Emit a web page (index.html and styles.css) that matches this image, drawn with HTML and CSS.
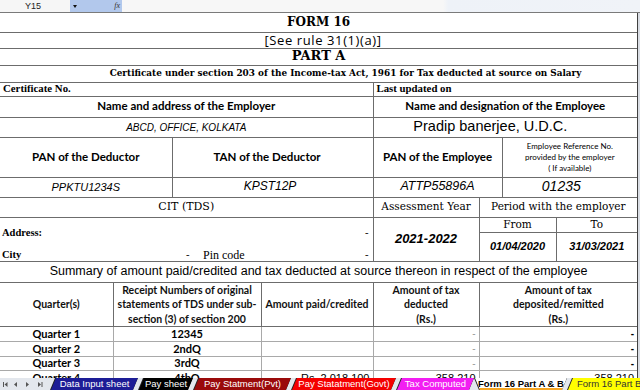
FILE: index.html
```html
<!DOCTYPE html>
<html>
<head>
<meta charset="utf-8">
<title>Form 16</title>
<link rel="stylesheet" href="styles.css">
</head>
<body>
<div class="app">
  <div class="fbar">
    <div class="namebox">Y15</div>
    <div class="fxbox"><span class="drop"></span><span class="fx">fx</span></div>
    <div class="formula"></div>
  </div>
  <div class="sheet">
    <table class="grid">
      <colgroup>
        <col class="c1"><col class="c2"><col class="c3"><col class="c4">
        <col class="c5"><col class="c6"><col class="c7"><col class="c8">
      </colgroup>
      <tr class="r-form"><td colspan="8" class="title form top">FORM 16</td></tr>
      <tr class="r-rule"><td colspan="8" class="rule">[See rule 31(1)(a)]</td></tr>
      <tr class="r-part"><td colspan="8" class="title">PART A</td></tr>
      <tr class="r-cert"><td colspan="8" class="cert">Certificate under section 203 of the Income-tax Act, 1961 for Tax deducted at source on Salary</td></tr>
      <tr class="r-lbl"><td colspan="4" class="lbl">Certificate No.</td><td colspan="4" class="lbl">Last updated on</td></tr>
      <tr class="r-name"><td colspan="4" class="hd">Name and address of the Employer</td><td colspan="4" class="hd">Name and designation of the Employee</td></tr>
      <tr class="r-nval"><td colspan="4" class="vi">ABCD, OFFICE, KOLKATA</td><td colspan="4" class="emp">Pradip banerjee, U.D.C.</td></tr>
      <tr class="r-pan"><td colspan="2" class="hd">PAN of the Deductor</td><td colspan="2" class="hd tanh">TAN of the Deductor</td><td colspan="2" class="hd">PAN of the Employee</td><td colspan="2" class="small">Employee Reference No.<br>provided by the employer<br>( If available)</td></tr>
      <tr class="r-pval"><td colspan="2" class="vi pan">PPKTU1234S</td><td colspan="2" class="vi tan">KPST12P</td><td colspan="2" class="vi pe">ATTP55896A</td><td colspan="2" class="vi ref">01235</td></tr>
      <tr class="r-cit"><td colspan="4" class="cit">CIT (TDS)</td><td class="ser">Assessment Year</td><td colspan="3" class="ser">Period with the employer</td></tr>
      <tr class="r-from">
        <td colspan="4" rowspan="2" class="addr">
          <div class="aline"><span class="alb">Address:</span><span>-</span></div>
          <div class="cline"><span class="alb">City</span><span class="cdash">-</span><span class="pin">Pin code</span><span class="edash">-</span></div>
        </td>
        <td rowspan="2" class="year">2021-2022</td>
        <td colspan="2" class="ser">From</td><td class="ser">To</td>
      </tr>
      <tr class="r-date"><td colspan="2" class="date">01/04/2020</td><td class="date">31/03/2021</td></tr>
      <tr class="r-sum"><td colspan="8" class="summ">Summary of amount paid/credited and tax deducted at source thereon in respect of the employee</td></tr>
      <tr class="r-qh">
        <td class="qh">Quarter(s)</td>
        <td colspan="2" class="qh">Receipt Numbers of original<br>statements of TDS under sub-<br>section (3) of section 200</td>
        <td class="qh">Amount paid/credited</td>
        <td class="qh">Amount of tax<br>deducted<br>(Rs.)</td>
        <td colspan="3" class="qh">Amount of tax<br>deposited/remitted<br>(Rs.)</td>
      </tr>
      <tr class="r-q"><td class="q">Quarter 1</td><td colspan="2" class="q">12345</td><td></td><td class="dl">-</td><td colspan="3" class="dd">-</td></tr>
      <tr class="r-q"><td class="q">Quarter 2</td><td colspan="2" class="q">2ndQ</td><td></td><td class="dl">-</td><td colspan="3" class="dd">-</td></tr>
      <tr class="r-q"><td class="q">Quarter 3</td><td colspan="2" class="q">3rdQ</td><td></td><td class="dl">-</td><td colspan="3" class="dd">-</td></tr>
      <tr class="r-q"><td class="q">Quarter 4</td><td colspan="2" class="q">4thQ</td><td class="num">Rs. 2,018,100</td><td class="num">358,210</td><td colspan="3" class="num">358,210</td></tr>
    </table>
    <div class="vscroll"></div>
  </div>
  <div class="tabs">
    <div class="nav">
      <svg width="48" height="12" viewBox="0 0 48 12">
        <rect x="3" y="4" width="1" height="5" fill="#555"/>
        <path d="M7.5 4 L4.5 6.5 L7.5 9 Z" fill="#555"/>
        <path d="M17 4 L14 6.5 L17 9 Z" fill="#555"/>
        <path d="M26 4 L29 6.5 L26 9 Z" fill="#555"/>
        <path d="M38 4 L41 6.5 L38 9 Z" fill="#555"/>
        <rect x="41.5" y="4" width="1" height="5" fill="#555"/>
      </svg>
    </div>
    <div class="tab w-data"><span class="bg-data">Data Input sheet</span></div>
    <div class="tab w-pay"><span class="bg-pay">Pay sheet</span></div>
    <div class="tab w-pvt"><span class="bg-pvt">Pay Statment(Pvt)</span></div>
    <div class="tab w-govt"><span class="bg-govt">Pay Statatment(Govt)</span></div>
    <div class="tab w-tax"><span class="bg-tax">Tax Computed</span></div>
    <div class="tab active w-act"><span>Form 16 Part A &amp; B</span></div>
    <div class="tab w-b"><span class="bg-b">Form 16 Part B</span></div>
  </div>
</div>
</body>
</html>
```

FILE: styles.css
```css
html, body {
  margin: 0;
  padding: 0;
  background: #ffffff;
}
body {
  width: 640px;
  height: 390px;
  overflow: hidden;
}
.app {
  width: 640px;
  height: 390px;
  display: flex;
  flex-direction: column;
}

/* formula bar */
.fbar {
  height: 12px;
  flex: none;
  display: flex;
  border-bottom: 1px solid #7a7a7a;
  background: #f6f6f6;
  font: 9px "Liberation Sans", Arial, sans-serif;
}
.namebox {
  width: 66px;
  padding-right: 4px;
  text-align: center;
  line-height: 12px;
  color: #222;
}
.fxbox {
  width: 52px;
  box-sizing: border-box;
  padding: 0 2px;
  background: #b2c8ec;
  display: flex;
  align-items: center;
  justify-content: space-between;
}
.drop {
  width: 0;
  height: 0;
  border-top: 3px solid #111;
  border-left: 2px solid transparent;
  border-right: 2px solid transparent;
  margin-left: 1px;
}
.fx {
  font: italic 8px "Liberation Serif", serif;
  color: #333;
  line-height: 12px;
}
.formula {
  flex: 1;
  background: linear-gradient(to right, #f7f7f7 0%, #f7f7f7 62%, #eef2f8 63%, #f0f3f8 100%);
}

/* sheet */
.sheet {
  height: 365px;
  flex: none;
  overflow: hidden;
  display: flex;
}
.grid {
  width: 637px;
  flex: none;
  border-collapse: collapse;
  table-layout: fixed;
  align-self: flex-start;
}
.vscroll {
  flex: 1;
  border-left: 1px solid #404040;
  background: #d9dde4;
}
.c1 { width: 113px; }
.c2 { width: 59px; }
.c3 { width: 89px; }
.c4 { width: 112px; }
.c5 { width: 106px; }
.c6 { width: 23px; }
.c7 { width: 54px; }
.c8 { width: 81px; }

.grid td {
  border: 1px solid #6c6c6c;
  padding: 0 3px;
  white-space: nowrap;
  overflow: hidden;
  color: #000;
  text-align: center;
  vertical-align: middle;
}
.grid tr td:first-child { border-left: none; }
.grid tr td:last-child { border-right: none; }
.grid td.top { border-top: none; }

.r-form { height: 19px; }
.r-rule { height: 16px; }
.r-part { height: 17px; }
.r-cert { height: 17px; }
.r-lbl { height: 14px; }
.r-name { height: 21px; }
.r-nval { height: 20px; }
.r-pan { height: 40px; }
.r-pval { height: 20px; }
.r-cit { height: 20px; }
.r-from { height: 15px; }
.r-date { height: 29px; }
.r-sum { height: 21px; }
.r-qh { height: 39px; }
.r-q { height: 14.8px; }

.grid td.title {
  font: bold 13px/1.1 "DejaVu Serif", serif;
}
.grid td.form {
  font-size: 12px;
}
.grid td.rule {
  font: 13px/1.1 "Open Sans", Lato, sans-serif;
  letter-spacing: 0.6px;
  padding-left: 12px;
}
.grid td.cert {
  font: bold 8.9px/1.1 "DejaVu Serif", serif;
  padding-left: 57px;
}
.grid td.lbl {
  font: bold 10.8px/1.1 "Liberation Serif", serif;
  text-align: left;
}
.grid td.hd {
  font: bold 11.5px/1.1 Lato, sans-serif;
}
.grid td.tanh { padding-right: 14px; }
.grid td.vi {
  font: italic 10px/1.1 "Liberation Sans", Arial, sans-serif;
}
.grid td.pan { font-size: 11px; }
.grid td.tan { font-size: 12px; padding-right: 8px; }
.grid td.pe { font-size: 12.5px; }
.grid td.ref { font-size: 14px; padding-right: 20px; }
.grid td.emp {
  font: 14.5px/1.1 "Liberation Sans", Arial, sans-serif;
  padding-right: 33px;
}
.grid td.small {
  font: 8px/11px Lato, sans-serif;
}
.grid td.cit {
  font: 11px/1.1 "DejaVu Serif", serif;
}
.grid td.ser {
  font: 10.5px/1.1 "DejaVu Serif", serif;
}
.grid td.year {
  font: bold italic 13px/1.1 "Liberation Sans", Arial, sans-serif;
}
.grid td.date {
  font: bold italic 11px/1.1 "Liberation Sans", Arial, sans-serif;
}
.grid td.addr {
  vertical-align: top;
  padding: 9px 4px 0 2px;
  text-align: left;
  font: 10.5px/1.1 "Liberation Serif", serif;
}
.aline, .cline {
  display: flex;
  align-items: center;
  height: 12px;
}
.aline { justify-content: space-between; }
.cline {
  margin-top: 10px;
  display: grid;
  grid-template-columns: 181px 20px 1fr auto;
  align-items: center;
}
.alb { font-weight: bold; }
.cdash { padding-left: 3px; }
.pin { font-size: 12px; }
.grid td.summ {
  font: 12.5px/1.1 "Liberation Sans", Arial, sans-serif;
}
.grid td.qh {
  font: bold 10.5px/14.5px Lato, sans-serif;
  color: #111;
}
.grid .r-q td {
  border-color: #a9a9a9;
}
.grid td.q {
  font: bold 11px/1.1 Lato, sans-serif;
}
.grid td.dl {
  text-align: right;
  color: #9a9a9a;
  font: 10px/1.1 "Liberation Sans", Arial, sans-serif;
}
.grid td.dd {
  text-align: right;
  font: bold 10px/1.1 "Liberation Sans", Arial, sans-serif;
}
.grid td.num {
  text-align: right;
  font: 11px/1.1 "Liberation Sans", Arial, sans-serif;
}

/* sheet tabs */
.tabs {
  height: 12px;
  flex: none;
  display: flex;
  background: #e3e7ed;
  overflow: hidden;
  font: 9.5px "Liberation Sans", Arial, sans-serif;
}
.nav {
  width: 50px;
  flex: none;
  height: 12px;
}
.nav svg { display: block; }
.tab {
  flex: none;
  height: 12px;
  box-sizing: border-box;
  padding-left: 1px;
  background: #222;
  clip-path: polygon(5px 0, 100% 0, calc(100% - 5px) 100%, 0 100%);
}
.tab span {
  display: block;
  height: 12px;
  line-height: 12px;
  text-align: center;
  color: #fff;
  white-space: nowrap;
  clip-path: polygon(5px 0, 100% 0, calc(100% - 5px) 100%, 0 100%);
}
.w-data { width: 88px; }
.w-pay { width: 55px; }
.w-pvt { width: 98px; }
.w-govt { width: 105px; }
.w-tax { width: 78px; }
.w-act { width: 93px; }
.w-b { width: 80px; }
.bg-data { background: #1d1d96; }
.bg-pay { background: #000; }
.bg-pvt { background: #9a0a0a; }
.bg-govt { background: #f40000; }
.bg-tax { background: #f21ef2; }
.tab .bg-b { background: #ffff00; color: #333; text-align: left; padding-left: 9px; }
.tab.active {
  clip-path: polygon(0 0, 100% 0, calc(100% - 5px) 100%, 5px 100%);
}
.tab.active span {
  background: #ffffff;
  color: #000;
  font-weight: bold;
  clip-path: polygon(0 0, 100% 0, calc(100% - 5px) 100%, 5px 100%);
  box-shadow: inset 0 -2px 0 #f5a623;
}
```
